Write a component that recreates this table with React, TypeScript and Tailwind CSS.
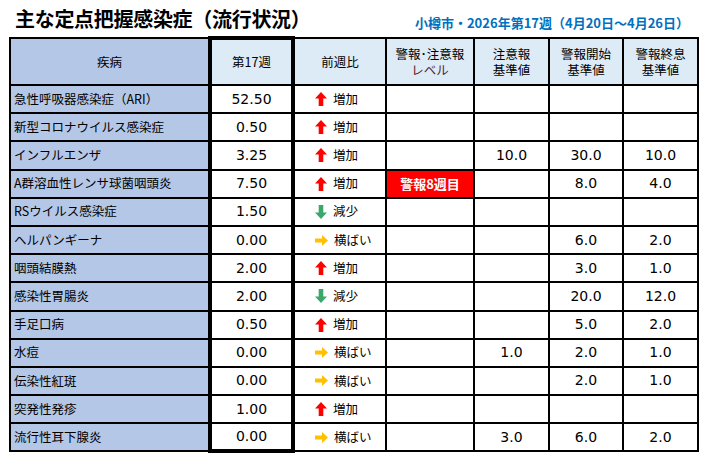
import React from "react"

type Trend = "up" | "down" | "flat"

type Row = {
  name: string
  value: string
  trend: Trend
  level?: string
  caution?: string
  alertStart?: string
  alertEnd?: string
}

const ROWS: Row[] = [
  { name: "急性呼吸器感染症（ARI）", value: "52.50", trend: "up" },
  { name: "新型コロナウイルス感染症", value: "0.50", trend: "up" },
  { name: "インフルエンザ", value: "3.25", trend: "up", caution: "10.0", alertStart: "30.0", alertEnd: "10.0" },
  { name: "A群溶血性レンサ球菌咽頭炎", value: "7.50", trend: "up", level: "警報8週目", alertStart: "8.0", alertEnd: "4.0" },
  { name: "RSウイルス感染症", value: "1.50", trend: "down" },
  { name: "ヘルパンギーナ", value: "0.00", trend: "flat", alertStart: "6.0", alertEnd: "2.0" },
  { name: "咽頭結膜熱", value: "2.00", trend: "up", alertStart: "3.0", alertEnd: "1.0" },
  { name: "感染性胃腸炎", value: "2.00", trend: "down", alertStart: "20.0", alertEnd: "12.0" },
  { name: "手足口病", value: "0.50", trend: "up", alertStart: "5.0", alertEnd: "2.0" },
  { name: "水痘", value: "0.00", trend: "flat", caution: "1.0", alertStart: "2.0", alertEnd: "1.0" },
  { name: "伝染性紅斑", value: "0.00", trend: "flat", alertStart: "2.0", alertEnd: "1.0" },
  { name: "突発性発疹", value: "1.00", trend: "up" },
  { name: "流行性耳下腺炎", value: "0.00", trend: "flat", caution: "3.0", alertStart: "6.0", alertEnd: "2.0" },
]

const TREND_LABEL: Record<Trend, string> = {
  up: "増加",
  down: "減少",
  flat: "横ばい",
}

const TrendIcon = ({ trend }: { trend: Trend }) => {
  if (trend === "up") {
    return (
      <svg width="12" height="14" viewBox="0 0 12 14" className="shrink-0">
        <path d="M6 0 L12 6.5 L8.3 6.5 L8.3 14 L3.7 14 L3.7 6.5 L0 6.5 Z" fill="#ff0000" />
      </svg>
    )
  }
  if (trend === "down") {
    return (
      <svg width="12" height="14" viewBox="0 0 12 14" className="shrink-0">
        <path d="M6 14 L12 7.5 L8.3 7.5 L8.3 0 L3.7 0 L3.7 7.5 L0 7.5 Z" fill="#3aa76d" />
      </svg>
    )
  }
  return (
    <svg width="13" height="11" viewBox="0 0 13 11" className="shrink-0">
      <path d="M13 5.5 L7 0 L7 3.5 L0 3.5 L0 7.5 L7 7.5 L7 11 Z" fill="#ffc000" />
    </svg>
  )
}

const cjk = "font-['Noto_Sans_CJK_JP',sans-serif]"
const num = "font-['DejaVu_Sans','Noto_Sans_CJK_JP',sans-serif]"

export default function App() {
  return (
    <div className={`w-[715px] h-[461px] bg-white text-black ${cjk}`}>
      {/* Title bar */}
      <div className="flex items-end justify-between h-[36px] pl-[15px] pr-[26px]">
        <h1 className="text-[20px] leading-[28px] font-bold tracking-[-0.3px] mb-[3px]">
          主な定点把握感染症（流行状況）
        </h1>
        <div className="text-[13px] leading-[16px] font-bold text-[#0070c0] mb-[5px]">
          小樽市・2026年第17週（4月20日〜4月26日）
        </div>
      </div>

      <table className="ml-[9px] w-[688px] table-fixed border-collapse text-[12.5px]">
        <colgroup>
          <col className="w-[200px]" />
          <col className="w-[83px]" />
          <col className="w-[93px]" />
          <col className="w-[88px]" />
          <col className="w-[75px]" />
          <col className="w-[74px]" />
          <col className="w-[75px]" />
        </colgroup>
        <thead>
          <tr className="h-[47px] leading-[16px]">
            <th className="border-2 border-black bg-[#b4c7e7] font-normal">疾病</th>
            <th className="border-2 border-x-4 border-t-4 border-black bg-[#ddebf7] font-normal">第17週</th>
            <th className="border-2 border-black bg-[#ddebf7] font-normal">前週比</th>
            <th className="border-2 border-black bg-[#ddebf7] font-normal">
              警報･注意報
              <br />
              <span className="text-[#5a1e1e]">レベル</span>
            </th>
            <th className="border-2 border-black bg-[#ddebf7] font-normal">
              注意報
              <br />
              基準値
            </th>
            <th className="border-2 border-black bg-[#ddebf7] font-normal">
              警報開始
              <br />
              基準値
            </th>
            <th className="border-2 border-black bg-[#ddebf7] font-normal">
              警報終息
              <br />
              基準値
            </th>
          </tr>
        </thead>
        <tbody>
          {ROWS.map((row, i) => {
            const last = i === ROWS.length - 1
            return (
              <tr key={row.name} className="h-[28.2px]">
                <td className="border-2 border-black bg-[#b4c7e7] pl-[3px] whitespace-nowrap">{row.name}</td>
                <td
                  className={`border-2 border-x-4 border-black text-center text-[14px] ${num} ${
                    last ? "border-b-4" : ""
                  }`}
                >
                  {row.value}
                </td>
                <td className="border-2 border-black pl-[20px]">
                  <div className="flex items-center gap-[6px]">
                    <TrendIcon trend={row.trend} />
                    <span>{TREND_LABEL[row.trend]}</span>
                  </div>
                </td>
                <td
                  className={`border-2 border-black text-center ${
                    row.level ? "bg-[#ff0000] text-white font-bold text-[13px]" : ""
                  }`}
                >
                  {row.level}
                </td>
                <td className={`border-2 border-black text-center text-[14px] ${num}`}>{row.caution}</td>
                <td className={`border-2 border-black text-center text-[14px] ${num}`}>{row.alertStart}</td>
                <td className={`border-2 border-black text-center text-[14px] ${num}`}>{row.alertEnd}</td>
              </tr>
            )
          })}
        </tbody>
      </table>
    </div>
  )
}
